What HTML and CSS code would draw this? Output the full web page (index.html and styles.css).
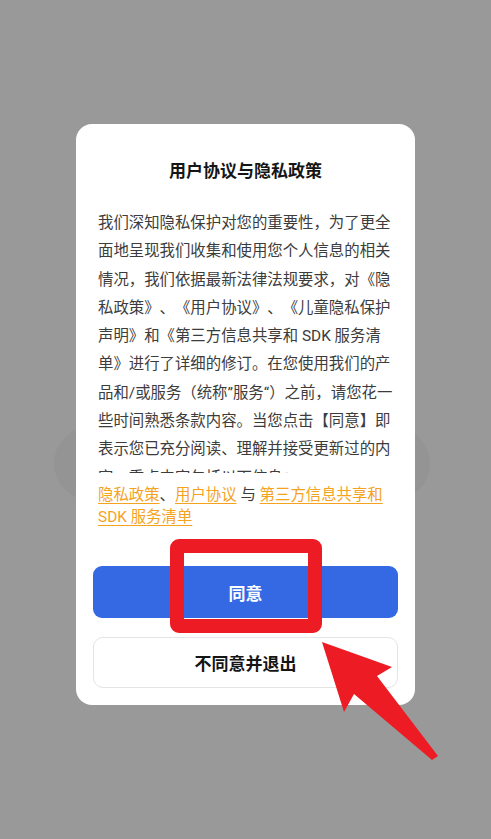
FILE: index.html
```html
<!DOCTYPE html>
<html lang="zh-CN">
<head>
<meta charset="utf-8">
<title>用户协议与隐私政策</title>
<link rel="stylesheet" href="styles.css">
</head>
<body>
<div class="screen">
  <div class="pill"></div>
</div>
<div class="overlay">
  <div class="dialog">
    <h1 class="title">用户协议与隐私政策</h1>
    <div class="scroll">
      <p class="body">我们深知隐私保护对您的重要性，为了更全面地呈现我们收集和使用您个人信息的相关情况，我们依据最新法律法规要求，对《隐私政策》、《用户协议》、《儿童隐私保护声明》和《第三方信息共享和 SDK 服务清单》进行了详细的修订。在您使用我们的产品和/或服务（统称”服务“）之前，请您花一些时间熟悉条款内容。当您点击【同意】即表示您已充分阅读、理解并接受更新过的内容，重点内容包括以下信息：</p>
    </div>
    <p class="links"><a class="link">隐私政策</a>、<a class="link">用户协议</a> 与 <a class="link">第三方信息共享和 SDK 服务清单</a></p>
    <div class="actions">
      <button class="btn btn-primary">同意</button>
      <button class="btn btn-secondary">不同意并退出</button>
    </div>
  </div>
</div>
<svg class="annotation" width="491" height="839" viewBox="0 0 491 839" xmlns="http://www.w3.org/2000/svg">
  <rect x="177" y="546" width="138" height="80" rx="2" fill="none" stroke="#ed1c24" stroke-width="14"/>
  <polygon points="322,642 392,667 377,676 438,756 432,760 354,694 344,712" fill="#ed1c24"/>
</svg>
</body>
</html>
```
FILE: styles.css
```css
* { box-sizing: border-box; }
html, body {
  margin: 0;
  padding: 0;
  width: 491px;
  height: 839px;
  overflow: hidden;
}
body {
  background: #999999;
  font-family: Roboto, "Noto Sans CJK SC", sans-serif;
  position: relative;
  text-spacing-trim: space-all;
}
.screen {
  padding: 427px 61px 0 54px;
}
.pill {
  height: 73px;
  border-radius: 37px;
  background: #949494;
}
.overlay {
  position: absolute;
  inset: 0;
  display: flex;
  justify-content: center;
  align-items: flex-start;
  padding-top: 124px;
}
.dialog {
  width: 339px;
  background: #ffffff;
  border-radius: 16px;
  padding: 35px 17px 17px;
  display: flex;
  flex-direction: column;
}
.title {
  margin: 0;
  font-size: 17px;
  line-height: 24px;
  font-weight: 700;
  color: #151515;
  text-align: center;
}
.scroll {
  margin-top: 26px;
  height: 264px;
  overflow: hidden;
  padding: 0 5px;
}
.body {
  margin: 0;
  font-size: 15.4px;
  line-height: 28.3px;
  color: #3c3c3c;
  text-spacing-trim: space-all;
}
.links {
  margin: 11px 0 0;
  padding: 0 5px;
  font-size: 15.4px;
  line-height: 22px;
  color: #3c3c3c;
  text-spacing-trim: space-all;
}
.link {
  color: #f5a31e;
  text-decoration: underline;
  text-underline-offset: 3px;
  text-decoration-thickness: 1px;
}
.actions {
  margin-top: 38px;
  display: flex;
  flex-direction: column;
  gap: 19px;
}
.btn {
  font-family: Roboto, "Noto Sans CJK SC", sans-serif;
  font-size: 17px;
  font-weight: 700;
  width: 100%;
  cursor: pointer;
}
.btn-primary {
  height: 52px;
  border: none;
  border-radius: 9px;
  background: #3469e3;
  color: #ffffff;
}
.btn-secondary {
  height: 51px;
  border: 1px solid #e4e4e4;
  border-radius: 10px;
  background: #ffffff;
  color: #151515;
}
.annotation {
  position: absolute;
  left: 0;
  top: 0;
  pointer-events: none;
}
```
